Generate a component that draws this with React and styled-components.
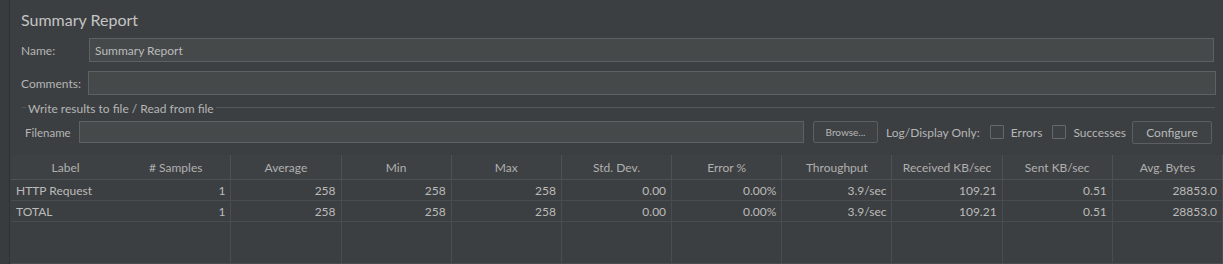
import React from "react";
import styled, { createGlobalStyle } from "styled-components";

const Global = createGlobalStyle`
  html, body { margin: 0; padding: 0; background: #3c3f41; }
  body { font-family: "Lato", "Open Sans", sans-serif; color: #bbbbbb; font-size: 12px; }
  * { box-sizing: border-box; }
`;

const Root = styled.div`
  display: flex;
  height: 264px;
  overflow: hidden;
  background: #3c3f41;
`;

const Strip = styled.div`
  width: 10px;
  flex: none;
  background: #393c3e;
  border-right: 1px solid #2f3234;
`;

const Main = styled.div`
  flex: 1;
  display: flex;
  flex-direction: column;
  min-width: 0;
`;

const Title = styled.div`
  font-size: 16px;
  line-height: 20px;
  color: #c4c4c4;
  padding: 10px 0 0 11px;
  height: 38px;
`;

const FieldRow = styled.div`
  display: flex;
  align-items: center;
  height: 24px;
  margin: 0 ${p => p.$right}px 9px 11px;
`;

const FieldLabel = styled.div`
  width: ${p => p.$w}px;
  flex: none;
  font-size: 12px;
  color: #b5b5b5;
`;

const Input = styled.div`
  flex: 1;
  height: 100%;
  background: #45494a;
  border: 1px solid #5e6161;
  padding-left: 5px;
  display: flex;
  align-items: center;
  font-size: 12px;
  color: #bbbbbb;
`;

const Group = styled.div`
  margin: 3px 8px 0 12px;
  position: relative;
  border-top: 1px solid #55585a;
`;

const Legend = styled.div`
  position: absolute;
  top: -6px;
  left: 4px;
  padding: 0 2px;
  background: #3c3f41;
  font-size: 12px;
  line-height: 14px;
  color: #b5b5b5;
`;

const FileRow = styled.div`
  display: flex;
  align-items: center;
  height: 24px;
  margin: 12px 6px 0 3px;
`;

const FileLabel = styled.div`
  width: 54px;
  flex: none;
  font-size: 11.5px;
  color: #b5b5b5;
`;

const FileInput = styled.div`
  width: 725px;
  flex: none;
  height: 22px;
  background: #45494a;
  border: 1px solid #5e6161;
`;

const Button = styled.div`
  height: ${p => p.$h}px;
  width: ${p => p.$w}px;
  flex: none;
  margin-left: ${p => p.$ml}px;
  border: 1px solid #5c5f61;
  border-radius: 2px;
  background: #3e4244;
  display: flex;
  align-items: center;
  justify-content: center;
  font-size: ${p => p.$fs}px;
  color: #b8b8b8;
`;

const Text = styled.div`
  margin-left: ${p => p.$ml}px;
  font-size: 12px;
  color: #b5b5b5;
  white-space: nowrap;
`;

const Check = styled.div`
  width: 14px;
  height: 14px;
  flex: none;
  margin-left: ${p => p.$ml}px;
  border: 1px solid #66696b;
  background: #3e4143;
  border-radius: 1px;
`;

const Table = styled.div`
  margin-top: 11px;
  margin-left: 1px;
  flex: 1;
  display: flex;
  flex-direction: column;
  min-height: 0;
`;

const Grid = styled.div`
  display: grid;
  grid-template-columns: repeat(11, 1fr);
  height: ${p => p.$h}px;
  flex: ${p => (p.$fill ? 1 : "none")};
  background: ${p => p.$bg || "#3c3f41"};
  border-bottom: 1px solid ${p => p.$line || "#4a4d4f"};
`;

const HeadCell = styled.div`
  display: flex;
  align-items: center;
  justify-content: center;
  font-size: 12px;
  color: #b0b0b0;
  border-right: 1px solid ${p => (p.$noline ? "transparent" : "#4f5254")};
  white-space: nowrap;
`;

const Cell = styled.div`
  display: flex;
  align-items: center;
  justify-content: ${p => (p.$left ? "flex-start" : "flex-end")};
  padding-left: ${p => (p.$left ? 5 : 0)}px;
  padding-right: ${p => (p.$left ? 0 : 5)}px;
  font-size: 12px;
  color: #bbbbbb;
  border-right: 1px solid ${p => (p.$noline ? "transparent" : "#4a4d4f")};
  white-space: nowrap;
`;

const headers = ["Label", "# Samples", "Average", "Min", "Max", "Std. Dev.", "Error %", "Throughput", "Received KB/sec", "Sent KB/sec", "Avg. Bytes"];
const rows = [
  ["HTTP Request", "1", "258", "258", "258", "0.00", "0.00%", "3.9/sec", "109.21", "0.51", "28853.0"],
  ["TOTAL", "1", "258", "258", "258", "0.00", "0.00%", "3.9/sec", "109.21", "0.51", "28853.0"],
];

export default function App() {
  return (
    <>
      <Global />
      <Root>
        <Strip />
        <Main>
          <Title>Summary Report</Title>
          <FieldRow $right={9}>
            <FieldLabel $w={68}>Name:</FieldLabel>
            <Input>Summary Report</Input>
          </FieldRow>
          <FieldRow $right={7}>
            <FieldLabel $w={67}>Comments:</FieldLabel>
            <Input />
          </FieldRow>
          <Group>
            <Legend>Write results to file / Read from file</Legend>
            <FileRow>
              <FileLabel>Filename</FileLabel>
              <FileInput />
              <Button $w={65} $h={22} $ml={9} $fs={10}>Browse...</Button>
              <Text $ml={8}>Log/Display Only:</Text>
              <Check $ml={10} />
              <Text $ml={7}>Errors</Text>
              <Check $ml={10} />
              <Text $ml={7}>Successes</Text>
              <Button $w={80} $h={23} $ml={6} $fs={12}>Configure</Button>
            </FileRow>
          </Group>
          <Table>
            <Grid $h={25} $bg="#3e4143" $line="#4f5254">
              {headers.map((h, i) => (
                <HeadCell key={h} $noline={i === 0}>{h}</HeadCell>
              ))}
            </Grid>
            {rows.map((r, ri) => (
              <Grid key={ri} $h={21}>
                {r.map((c, i) => (
                  <Cell key={i} $left={i === 0} $noline={i === 0}>{c}</Cell>
                ))}
              </Grid>
            ))}
            <Grid $fill>
              {headers.map((h, i) => (
                <Cell key={h} $noline={i === 0} />
              ))}
            </Grid>
          </Table>
        </Main>
      </Root>
    </>
  );
}
